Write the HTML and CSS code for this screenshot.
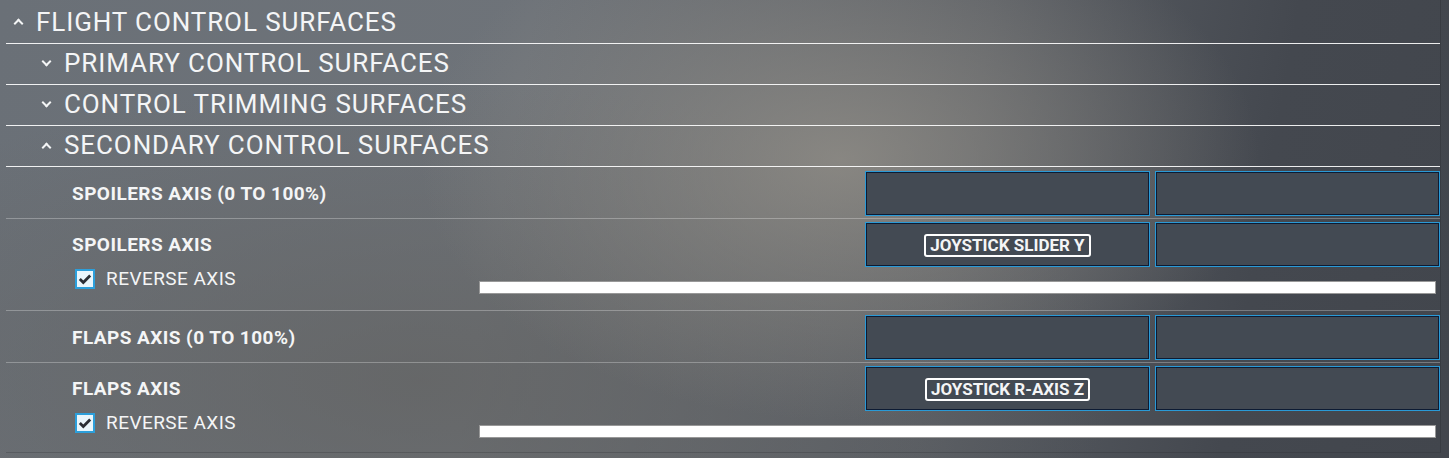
FILE: index.html
```html
<!DOCTYPE html>
<html lang="en">
<head>
    <meta charset="UTF-8">
    <title>Flight Control Surfaces</title>
    <link rel="stylesheet" href="styles.css">
</head>
<body>
<div class="panel">
    <div class="section-head level-0">
        <span class="chev up"></span>FLIGHT CONTROL SURFACES
    </div>
    <div class="section-head level-1">
        <span class="chev down"></span>PRIMARY CONTROL SURFACES
    </div>
    <div class="section-head level-1">
        <span class="chev down"></span>CONTROL TRIMMING SURFACES
    </div>
    <div class="section-head level-1">
        <span class="chev up"></span>SECONDARY CONTROL SURFACES
    </div>

    <div class="binding">
        <div class="binding-top">
            <div class="binding-name">SPOILERS AXIS (0 TO 100%)</div>
            <div class="slot"></div>
            <div class="slot"></div>
        </div>
    </div>

    <div class="binding with-extra">
        <div class="binding-top">
            <div class="binding-name">SPOILERS AXIS</div>
            <div class="slot"><span class="key">JOYSTICK SLIDER Y</span></div>
            <div class="slot"></div>
        </div>
        <div class="binding-extra">
            <label class="check"><span class="box"><svg viewBox="0 0 16 16"><path d="M2.8 8 L6.3 11.5 L13.2 4.4"/></svg></span>REVERSE AXIS</label>
            <div class="axis-bar"></div>
        </div>
    </div>

    <div class="binding">
        <div class="binding-top">
            <div class="binding-name">FLAPS AXIS (0 TO 100%)</div>
            <div class="slot"></div>
            <div class="slot"></div>
        </div>
    </div>

    <div class="binding with-extra last">
        <div class="binding-top">
            <div class="binding-name">FLAPS AXIS</div>
            <div class="slot"><span class="key">JOYSTICK R-AXIS Z</span></div>
            <div class="slot"></div>
        </div>
        <div class="binding-extra">
            <label class="check"><span class="box"><svg viewBox="0 0 16 16"><path d="M2.8 8 L6.3 11.5 L13.2 4.4"/></svg></span>REVERSE AXIS</label>
            <div class="axis-bar"></div>
        </div>
    </div>
</div>
</body>
</html>
```

FILE: styles.css
```css
:root {
    --text: #f4f5f6;
    --head-line: rgba(255, 255, 255, 0.9);
    --row-line: rgba(255, 255, 255, 0.28);
    --slot-bg: #434a53;
    --slot-border: #2a9ad6;
    --slot-inner: #0d1b33;
    --check-border: #2c9fdb;
}

* {
    box-sizing: border-box;
}

html, body {
    height: 100%;
}

body {
    margin: 0;
    overflow: hidden;
    font-family: Roboto, 'Liberation Sans', sans-serif;
    color: var(--text);
    background-color: #5f6165;
    background-image:
        radial-gradient(ellipse 420px 260px at 840px 160px, rgba(150, 146, 138, 0.75), rgba(150, 146, 138, 0) 100%),
        radial-gradient(ellipse 700px 300px at 420px 380px, rgba(98, 98, 97, 0.7), rgba(98, 98, 97, 0) 100%),
        linear-gradient(100deg, #6a7077 0%, #6e7379 35%, #5a5e64 65%, #44484f 85%, #42464d 100%);
}

.panel {
    margin-left: 6px;
    width: 1435px;
    height: 453px;
    border-right: 1px solid rgba(40, 42, 46, 0.35);
    border-bottom: 1px solid rgba(40, 42, 46, 0.25);
}

/* collapsible headers */
.section-head {
    display: flex;
    align-items: center;
    height: 41px;
    border-bottom: 1px solid var(--head-line);
    font-size: 26px;
    letter-spacing: 0.9px;
    white-space: nowrap;
}

.section-head.level-0 {
    height: 44px;
    padding-left: 9px;
}

.section-head.level-1 {
    padding-left: 37px;
    padding-bottom: 2px;
}

.chev {
    display: inline-block;
    width: 7px;
    height: 7px;
    margin-right: 14px;
    border-left: 2.5px solid var(--text);
    border-top: 2.5px solid var(--text);
}

.chev.up {
    transform: translateY(2px) rotate(45deg);
}

.chev.down {
    transform: translateY(-2px) rotate(225deg);
}

/* binding rows */
.binding {
    height: 52px;
    padding: 4px 0 0 66px;
    border-bottom: 1px solid var(--row-line);
}

.binding.with-extra {
    height: 92px;
    padding-top: 3px;
}

.binding.last {
    border-bottom: none;
}

.binding-top {
    display: grid;
    grid-template-columns: 1fr 285px 285px;
    column-gap: 5px;
    align-items: center;
}

.binding-name {
    font-size: 19px;
    font-weight: 700;
    letter-spacing: 0.45px;
}

.slot {
    height: 45px;
    background: var(--slot-bg);
    border: 1px solid var(--slot-border);
    box-shadow: inset 0 0 0 1px var(--slot-inner);
    display: flex;
    align-items: center;
    justify-content: center;
}

.key {
    display: inline-block;
    padding: 0 4px;
    border: 2px solid #ffffff;
    border-radius: 3px;
    font-size: 17px;
    font-weight: 700;
    letter-spacing: 0;
    line-height: 19px;
    margin-top: 1px;
}

.binding-extra {
    display: flex;
    align-items: flex-start;
}

.check {
    display: flex;
    align-items: center;
    margin-left: 3px;
    font-size: 19px;
    letter-spacing: 0.45px;
    gap: 11px;
}

.check .box {
    width: 20px;
    height: 20px;
    border: 2px solid var(--check-border);
    background: #eaf6fc;
    display: flex;
    align-items: center;
    justify-content: center;
}

.check svg {
    width: 16px;
    height: 16px;
    fill: none;
    stroke: #2a2e35;
    stroke-width: 2.8;
}

.axis-bar {
    margin-left: auto;
    margin-right: 4px;
    margin-top: 14px;
    width: 957px;
    height: 13px;
    background: #ffffff;
    border: 1px solid rgba(50, 50, 50, 0.5);
}
```
